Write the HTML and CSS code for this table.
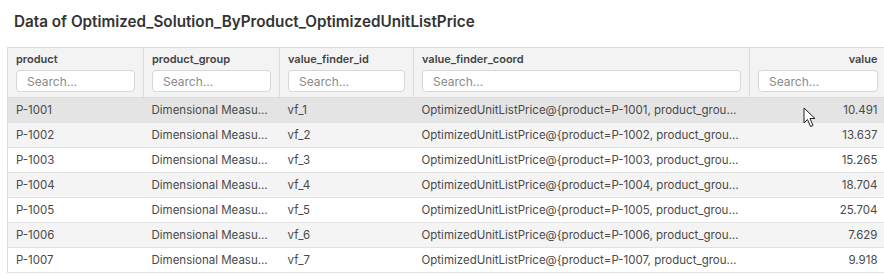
FILE: index.html
```html
<!DOCTYPE html>
<html lang="en">
<head>
    <meta charset="UTF-8">
    <meta name="viewport" content="width=device-width, initial-scale=1.0">
    <title>Optimized_Solution_ByProduct_OptimizedUnitListPrice</title>
    <link rel="stylesheet" href="styles.css">
</head>
<body>
    <h2 class="title">Data of Optimized_Solution_ByProduct_OptimizedUnitListPrice</h2>

    <div class="table-wrap">
        <table class="data-table">
            <colgroup>
                <col class="c-product">
                <col class="c-group">
                <col class="c-id">
                <col class="c-coord">
                <col class="c-value">
            </colgroup>
            <thead>
                <tr>
                    <th><div class="th-label">product</div><input type="text" placeholder="Search..."></th>
                    <th><div class="th-label">product_group</div><input type="text" placeholder="Search..."></th>
                    <th><div class="th-label">value_finder_id</div><input type="text" placeholder="Search..."></th>
                    <th><div class="th-label">value_finder_coord</div><input type="text" placeholder="Search..."></th>
                    <th class="num"><div class="th-label">value</div><input type="text" placeholder="Search..."></th>
                </tr>
            </thead>
            <tbody>
                <tr class="hover">
                    <td>P-1001</td><td>Dimensional Measurement</td><td>vf_1</td>
                    <td>OptimizedUnitListPrice@{product=P-1001, product_group=Dimensional Measurement}</td>
                    <td class="num">10.491</td>
                </tr>
                <tr>
                    <td>P-1002</td><td>Dimensional Measurement</td><td>vf_2</td>
                    <td>OptimizedUnitListPrice@{product=P-1002, product_group=Dimensional Measurement}</td>
                    <td class="num">13.637</td>
                </tr>
                <tr>
                    <td>P-1003</td><td>Dimensional Measurement</td><td>vf_3</td>
                    <td>OptimizedUnitListPrice@{product=P-1003, product_group=Dimensional Measurement}</td>
                    <td class="num">15.265</td>
                </tr>
                <tr>
                    <td>P-1004</td><td>Dimensional Measurement</td><td>vf_4</td>
                    <td>OptimizedUnitListPrice@{product=P-1004, product_group=Dimensional Measurement}</td>
                    <td class="num">18.704</td>
                </tr>
                <tr>
                    <td>P-1005</td><td>Dimensional Measurement</td><td>vf_5</td>
                    <td>OptimizedUnitListPrice@{product=P-1005, product_group=Dimensional Measurement}</td>
                    <td class="num">25.704</td>
                </tr>
                <tr>
                    <td>P-1006</td><td>Dimensional Measurement</td><td>vf_6</td>
                    <td>OptimizedUnitListPrice@{product=P-1006, product_group=Dimensional Measurement}</td>
                    <td class="num">7.629</td>
                </tr>
                <tr>
                    <td>P-1007</td><td>Dimensional Measurement</td><td>vf_7</td>
                    <td>OptimizedUnitListPrice@{product=P-1007, product_group=Dimensional Measurement}</td>
                    <td class="num">9.918</td>
                </tr>
            </tbody>
        </table>

        <!-- mouse pointer hovering over the first row -->
        <svg class="cursor" width="14" height="21" viewBox="0 0 14 21">
            <path d="M1 1 L1 16 L4.5 12.5 L7.5 19.5 L10 18.5 L7 11.5 L12 11.5 Z" fill="#fff" stroke="#222" stroke-width="1" stroke-linejoin="round"/>
        </svg>
    </div>
</body>
</html>
```

FILE: styles.css
```css
* {
    margin: 0;
    padding: 0;
    box-sizing: border-box;
}

body {
    font-family: Inter, 'Noto Sans', sans-serif;
    background: white;
    color: #444;
    overflow: hidden;
}

.title {
    font-size: 15.25px;
    font-weight: 600;
    color: #333;
    padding: 12px 0 0 14px;
    height: 47px;
}

.table-wrap {
    position: relative;
    padding-left: 7px;
    overflow: hidden;
}

.data-table {
    table-layout: fixed;
    border-collapse: collapse;
    width: 878px;
    font-size: 11.5px;
}

.c-product { width: 136px; }
.c-group { width: 136px; }
.c-id { width: 134px; }
.c-coord { width: 336px; }
.c-value { width: 136px; }

.data-table th {
    background: #f3f3f3;
    border: 1px solid #dcdcdc;
    border-right: none;
    padding: 3px 8px 5px;
    text-align: left;
    vertical-align: top;
}

.data-table th + th {
    border-left: 1px solid #dcdcdc;
}

.th-label {
    font-size: 11px;
    font-weight: 600;
    color: #444;
    line-height: 16px;
    margin-bottom: 3px;
}

.data-table th input {
    display: block;
    width: 100%;
    height: 22px;
    border: 1px solid #d6d6d6;
    border-radius: 4px;
    background: white;
    padding: 0 10px;
    font-family: inherit;
    font-size: 12px;
    color: #444;
}

.data-table th input::placeholder {
    color: #8a8a8a;
}

.data-table td {
    padding: 4px 8px;
    line-height: 16px;
    border-bottom: 1px solid #e2e2e2;
    white-space: nowrap;
    overflow: hidden;
    text-overflow: ellipsis;
    color: #4a4a4a;
}

.data-table td:first-child {
    border-left: 1px solid #dcdcdc;
}

.data-table tbody tr:nth-child(even) {
    background: #f4f4f4;
}

.data-table tbody tr.hover {
    background: #e4e4e4;
}

.data-table .num {
    text-align: right;
}

.cursor {
    position: absolute;
    left: 803px;
    top: 60px;
}
```
